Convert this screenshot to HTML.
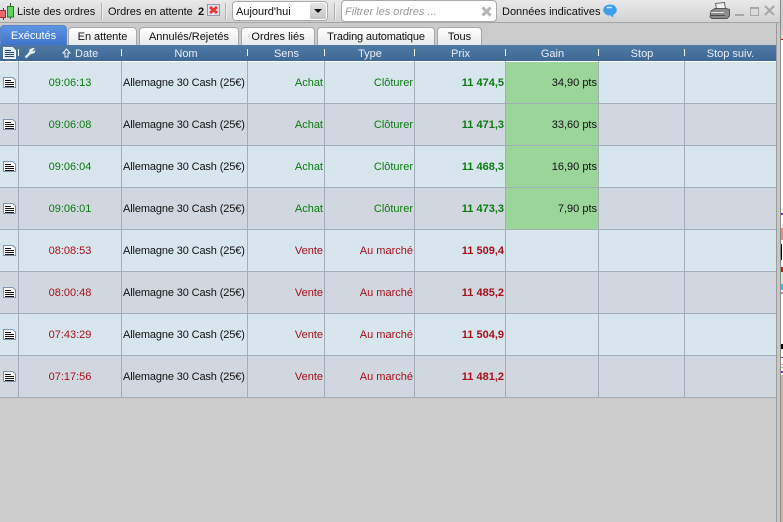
<!DOCTYPE html>
<html><head><meta charset="utf-8">
<style>
html,body{margin:0;padding:0;width:783px;height:522px;overflow:hidden;background:#cbcbcb;font-family:"Liberation Sans",sans-serif;font-size:11px;color:#111}
.a{position:absolute;white-space:nowrap}
#tb{position:absolute;left:0;top:0;width:780px;height:22px;background:linear-gradient(#e9e9e9,#d2d2d2);border-bottom:1px solid #a6a6a6}
.sep{position:absolute;top:3px;width:1px;height:17px;background:#b0b0b0;border-right:1px solid #efefef}
.tab{position:absolute;top:27px;height:18px;line-height:19px;box-sizing:border-box;border:1px solid #a8a8a8;border-bottom:0;border-radius:4px 4px 0 0;background:linear-gradient(#fff,#e9e9e9);text-align:center;color:#111}
.tab.on{background:linear-gradient(#5d94e2,#3f74cc);color:#fff;border-color:#5a86c8;top:25px;height:20px;line-height:20px}
#hd{position:absolute;left:0;top:45px;width:776px;height:16px;background:linear-gradient(#4f7aa6,#3f6893)}
.ht{position:absolute;top:3px;color:#e8eef5;text-align:center;line-height:13px}
.hs{position:absolute;top:4px;width:1px;height:7px;background:#f2f5f8}
.row{position:absolute;left:0;width:776px;height:41px;border-bottom:1px solid #a3afb8}
.r0{background:#d7e5ec}.r1{background:#d1d7de}
.vl{position:absolute;top:61px;width:1px;height:337px;background:#a3afb8}
.c{position:absolute;top:0;height:41px;line-height:43px;white-space:nowrap}
.n{letter-spacing:-.13px}
.g{color:#0b7a12}.rd{color:#a80f1d}
.gain{position:absolute;left:506px;top:0;width:92px;height:41px;background:#9bd59a}
.ic{position:absolute;left:3px;top:15px}
</style></head><body>
<div id="tb"></div>
<div class="a" style="left:776px;top:23px;width:1px;height:499px;background:#9a9a9a"></div>
<div class="a" style="left:777px;top:23px;width:3px;height:499px;background:#c8c8c8"></div>
<div class="a" style="left:780px;top:0;width:1px;height:522px;background:#8a8a8a"></div>
<div class="a" style="left:781px;top:0;width:2px;height:30px;background:#cfcfcf"></div>
<div class="a" style="left:781px;top:30px;width:2px;height:345px;background:#fff"></div>
<div class="a" style="left:781px;top:30px;width:2px;height:10px;background:#f3c9c9"></div>
<div class="a" style="left:781px;top:39px;width:2px;height:1px;background:#f00"></div>
<div class="a" style="left:781px;top:213px;width:2px;height:2px;background:#7a1fe0"></div>
<div class="a" style="left:781px;top:228px;width:2px;height:12px;background:#e88"></div>
<div class="a" style="left:781px;top:244px;width:1px;height:16px;background:#000"></div>
<div class="a" style="left:781px;top:267px;width:2px;height:5px;background:#f00"></div>
<div class="a" style="left:781px;top:272px;width:2px;height:12px;background:#d5e8d5"></div>
<div class="a" style="left:781px;top:284px;width:2px;height:6px;background:#0dd"></div>
<div class="a" style="left:781px;top:292px;width:2px;height:2px;background:#f6a"></div>
<div class="a" style="left:781px;top:344px;width:2px;height:5px;background:#000"></div>
<div class="a" style="left:781px;top:357px;width:2px;height:1px;background:#7a1fe0"></div>
<div class="a" style="left:781px;top:364px;width:2px;height:1px;background:#e88"></div>
<div class="a" style="left:781px;top:367px;width:2px;height:1px;background:#8c8"></div>
<div class="a" style="left:781px;top:371px;width:2px;height:2px;background:#7a1fe0"></div>
<div class="a" style="left:781px;top:375px;width:2px;height:147px;background:#c9b8a8"></div>

<svg class="a" style="left:0;top:2px" width="15" height="20"><path d="M3.500 6V18M10.500 1V17" stroke="#444" stroke-width="1"/><rect x="-0.500" y="8.500" width="6" height="7" fill="#e76b6b" stroke="#933"/><rect x="7.500" y="4.500" width="6" height="10.500" fill="#5fd25f" stroke="#2a7d2a"/></svg>
<div class="a" style="left:17px;top:6px;line-height:13px">Liste des ordres</div>
<div class="sep" style="left:101px"></div>
<div class="a" style="left:108px;top:6px;line-height:13px;letter-spacing:-.05px">Ordres en attente</div>
<div class="a" style="left:198px;top:6px;line-height:13px;font-weight:bold">2</div>
<svg class="a" style="left:207px;top:4px" width="13" height="13"><rect x="0.500" y="0.500" width="12" height="11" fill="#dfe5ee" stroke="#8f9aa8"/><path d="M3 3L10 9M10 3L3 9" stroke="#f0343a" stroke-width="2.800"/></svg>
<div class="sep" style="left:225px"></div>
<div class="a" style="left:232px;top:1px;width:96px;height:20px;box-sizing:border-box;border:1px solid #aaa;border-radius:4px;background:#fff;line-height:21px;padding-left:3px">Aujourd'hui</div>
<div class="a" style="left:310px;top:3px;width:16px;height:16px;background:linear-gradient(#e6e6e6,#c4c4c4);border-radius:2px"></div>
<div class="a" style="left:314px;top:9px;width:0;height:0;border:4px solid transparent;border-top:4px solid #111;border-bottom:0"></div>
<div class="sep" style="left:334px"></div>
<div class="a" style="left:341px;top:0;width:156px;height:22px;box-sizing:border-box;border:1px solid #aaa;border-radius:4px;background:#fff;line-height:23px;padding-left:3px;font-style:italic;color:#9a9a9a">Filtrer les ordres ...</div>
<svg class="a" style="left:481px;top:6px" width="11" height="11"><path d="M1.500 1.500L9.500 9.500M9.500 1.500L1.500 9.500" stroke="#b5b5b5" stroke-width="3"/></svg>
<div class="a" style="left:502px;top:6px;line-height:13px">Données indicatives</div>
<svg class="a" style="left:603px;top:4px" width="14" height="14"><ellipse cx="7" cy="6" rx="6.800" ry="5.500" fill="#3ba0e6"/><path d="M6 10L10 13.500L10.500 9Z" fill="#3ba0e6"/><path d="M3.500 3.500H9" stroke="#c5e6fb" stroke-width="1.500"/></svg>
<svg class="a" style="left:709px;top:2px" width="21" height="18"><path d="M6.500 1.500L15.500 0.500L16.500 7H7.500Z" fill="#f2f2f2" stroke="#666"/><path d="M2 9L6 6.500H17L20.500 7.500V14L18 16.500H3L1 15Z" fill="#8d8d8d" stroke="#555"/><path d="M2 10.500H15" stroke="#e2e2e2"/><path d="M2 13.500H16" stroke="#4d4d4d"/></svg>
<div class="a" style="left:735px;top:14px;width:9px;height:2px;background:#a8a8a8"></div>
<div class="a" style="left:750px;top:7px;width:7px;height:6px;border:1px solid #a8a8a8;border-top-width:2px"></div>
<svg class="a" style="left:764px;top:5px" width="11" height="11"><path d="M1 1L10 10M10 1L1 10" stroke="#a8a8a8" stroke-width="2"/></svg>

<div class="tab on" style="left:0;width:67px">Exécutés</div>
<div class="tab" style="left:68px;width:69px;letter-spacing:-.05px">En attente</div>
<div class="tab" style="left:139px;width:100px">Annulés/Rejetés</div>
<div class="tab" style="left:241px;width:74px">Ordres liés</div>
<div class="tab" style="left:317px;width:118px;letter-spacing:-.15px">Trading automatique</div>
<div class="tab" style="left:437px;width:45px">Tous</div>

<div id="hd">
<svg class="a" style="left:3px;top:2px" width="14" height="13"><path d="M0.500 0.500H9.500L12.500 3.500V11.500H0.500Z" fill="#dfe8f2" stroke="#f3f6fa"/><path d="M2 3.500H8M2 5.500H11M2 7.500H11M2 9.500H11" stroke="#28496f"/></svg>
<svg class="a" style="left:24px;top:2px" width="12" height="12"><path d="M1.500 10.500L6.500 5.500" stroke="#eef2f7" stroke-width="2.400" fill="none"/><path d="M5 6L5.500 2.500L8.500 1L11 1.500L8.500 3.500L9 4.500L11.500 3L10.500 6L7.500 7Z" fill="#eef2f7"/></svg>
<svg class="a" style="left:62px;top:3px" width="9" height="10"><path d="M4.500 1L8 5H6V9H3V5H1Z" fill="none" stroke="#eef2f7"/></svg>
<div class="ht" style="left:75px">Date</div>
<div class="ht" style="left:123px;width:126px">Nom</div>
<div class="ht" style="left:248px;width:77px">Sens</div>
<div class="ht" style="left:325px;width:90px">Type</div>
<div class="ht" style="left:415px;width:91px">Prix</div>
<div class="ht" style="left:506px;width:93px">Gain</div>
<div class="ht" style="left:599px;width:86px">Stop</div>
<div class="ht" style="left:685px;width:91px">Stop suiv.</div>
<div class="hs" style="left:18px"></div><div class="hs" style="left:121px"></div><div class="hs" style="left:247px"></div><div class="hs" style="left:324px"></div><div class="hs" style="left:414px"></div><div class="hs" style="left:505px"></div><div class="hs" style="left:598px"></div><div class="hs" style="left:684px"></div>
</div>
<div class="a" style="left:0;top:61px;width:776px;height:1px;background:#fff"></div>

<div class="row r0" style="top:62px"><svg class="ic" width="13" height="12"><path d="M0.500 0.500H9.500L12.500 3V10.500H0.500Z" fill="#fff" stroke="#7f94ad"/><path d="M2 3.500H8M2 5.500H11M2 7.500H11M2 9.500H11" stroke="#111"/></svg><div class="gain"></div><div class="c g" style="left:19px;width:102px;text-align:center">09:06:13</div><div class="c n" style="left:123px">Allemagne 30 Cash (25€)</div><div class="c g" style="right:453px">Achat</div><div class="c g" style="right:363px">Clôturer</div><div class="c g" style="right:272px;font-weight:bold">11 474,5</div><div class="c" style="right:179px">34,90 pts</div></div>
<div class="row r1" style="top:104px"><svg class="ic" width="13" height="12"><path d="M0.500 0.500H9.500L12.500 3V10.500H0.500Z" fill="#fff" stroke="#7f94ad"/><path d="M2 3.500H8M2 5.500H11M2 7.500H11M2 9.500H11" stroke="#111"/></svg><div class="gain"></div><div class="c g" style="left:19px;width:102px;text-align:center">09:06:08</div><div class="c n" style="left:123px">Allemagne 30 Cash (25€)</div><div class="c g" style="right:453px">Achat</div><div class="c g" style="right:363px">Clôturer</div><div class="c g" style="right:272px;font-weight:bold">11 471,3</div><div class="c" style="right:179px">33,60 pts</div></div>
<div class="row r0" style="top:146px"><svg class="ic" width="13" height="12"><path d="M0.500 0.500H9.500L12.500 3V10.500H0.500Z" fill="#fff" stroke="#7f94ad"/><path d="M2 3.500H8M2 5.500H11M2 7.500H11M2 9.500H11" stroke="#111"/></svg><div class="gain"></div><div class="c g" style="left:19px;width:102px;text-align:center">09:06:04</div><div class="c n" style="left:123px">Allemagne 30 Cash (25€)</div><div class="c g" style="right:453px">Achat</div><div class="c g" style="right:363px">Clôturer</div><div class="c g" style="right:272px;font-weight:bold">11 468,3</div><div class="c" style="right:179px">16,90 pts</div></div>
<div class="row r1" style="top:188px"><svg class="ic" width="13" height="12"><path d="M0.500 0.500H9.500L12.500 3V10.500H0.500Z" fill="#fff" stroke="#7f94ad"/><path d="M2 3.500H8M2 5.500H11M2 7.500H11M2 9.500H11" stroke="#111"/></svg><div class="gain"></div><div class="c g" style="left:19px;width:102px;text-align:center">09:06:01</div><div class="c n" style="left:123px">Allemagne 30 Cash (25€)</div><div class="c g" style="right:453px">Achat</div><div class="c g" style="right:363px">Clôturer</div><div class="c g" style="right:272px;font-weight:bold">11 473,3</div><div class="c" style="right:179px">7,90 pts</div></div>
<div class="row r0" style="top:230px"><svg class="ic" width="13" height="12"><path d="M0.500 0.500H9.500L12.500 3V10.500H0.500Z" fill="#fff" stroke="#7f94ad"/><path d="M2 3.500H8M2 5.500H11M2 7.500H11M2 9.500H11" stroke="#111"/></svg><div class="c rd" style="left:19px;width:102px;text-align:center">08:08:53</div><div class="c n" style="left:123px">Allemagne 30 Cash (25€)</div><div class="c rd" style="right:453px">Vente</div><div class="c rd" style="right:363px">Au marché</div><div class="c rd" style="right:272px;font-weight:bold">11 509,4</div></div>
<div class="row r1" style="top:272px"><svg class="ic" width="13" height="12"><path d="M0.500 0.500H9.500L12.500 3V10.500H0.500Z" fill="#fff" stroke="#7f94ad"/><path d="M2 3.500H8M2 5.500H11M2 7.500H11M2 9.500H11" stroke="#111"/></svg><div class="c rd" style="left:19px;width:102px;text-align:center">08:00:48</div><div class="c n" style="left:123px">Allemagne 30 Cash (25€)</div><div class="c rd" style="right:453px">Vente</div><div class="c rd" style="right:363px">Au marché</div><div class="c rd" style="right:272px;font-weight:bold">11 485,2</div></div>
<div class="row r0" style="top:314px"><svg class="ic" width="13" height="12"><path d="M0.500 0.500H9.500L12.500 3V10.500H0.500Z" fill="#fff" stroke="#7f94ad"/><path d="M2 3.500H8M2 5.500H11M2 7.500H11M2 9.500H11" stroke="#111"/></svg><div class="c rd" style="left:19px;width:102px;text-align:center">07:43:29</div><div class="c n" style="left:123px">Allemagne 30 Cash (25€)</div><div class="c rd" style="right:453px">Vente</div><div class="c rd" style="right:363px">Au marché</div><div class="c rd" style="right:272px;font-weight:bold">11 504,9</div></div>
<div class="row r1" style="top:356px"><svg class="ic" width="13" height="12"><path d="M0.500 0.500H9.500L12.500 3V10.500H0.500Z" fill="#fff" stroke="#7f94ad"/><path d="M2 3.500H8M2 5.500H11M2 7.500H11M2 9.500H11" stroke="#111"/></svg><div class="c rd" style="left:19px;width:102px;text-align:center">07:17:56</div><div class="c n" style="left:123px">Allemagne 30 Cash (25€)</div><div class="c rd" style="right:453px">Vente</div><div class="c rd" style="right:363px">Au marché</div><div class="c rd" style="right:272px;font-weight:bold">11 481,2</div></div>

<div class="vl" style="left:18px"></div><div class="vl" style="left:121px"></div><div class="vl" style="left:247px"></div><div class="vl" style="left:324px"></div><div class="vl" style="left:414px"></div><div class="vl" style="left:505px"></div><div class="vl" style="left:598px"></div><div class="vl" style="left:684px"></div>
</body></html>
